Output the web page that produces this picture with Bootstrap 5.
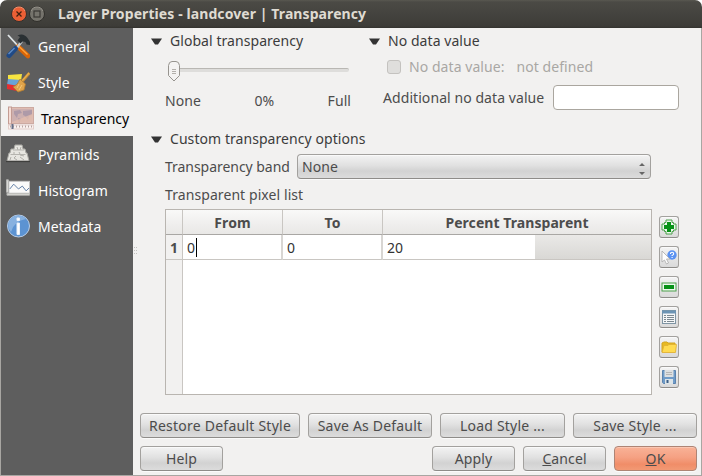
<!DOCTYPE html>
<html lang="en">
<head>
<meta charset="utf-8">
<meta name="viewport" content="width=device-width, initial-scale=1">
<title>Layer Properties - landcover | Transparency</title>
<link href="https://cdn.jsdelivr.net/npm/bootstrap@5.3.0/dist/css/bootstrap.min.css" rel="stylesheet">
<style>
body{width:702px;height:476px;overflow:hidden;background:#fff;font-family:"Noto Sans","Open Sans",sans-serif;font-size:14px;line-height:20px;color:#4c4c4c;letter-spacing:.06px;white-space:nowrap}
svg{display:block;flex:none}
.win{width:702px;height:476px}
.titlebar{height:28px;background:linear-gradient(#595850 0,#4b4a45 2px,#3d3c38 26px,#34332f);border-radius:7px 7px 0 0;color:#dfdbd2;font-weight:700;padding-left:11px;letter-spacing:.09px}
.wbtn{width:16px;height:16px}
.wbtn+.wbtn{margin-left:2px}
.caption-text{margin-left:13px}
.frame{height:448px;border:1px solid #a8a6a2;border-top:0;background:#f2f1f0}
.side{width:132px;background:#5e5e5e;color:#fff}
.side .item{height:36px;padding-left:5px;gap:8px}
.side .item span{padding-top:2px}
.side .item.sel{background:#f2f1f0;color:#000;padding-left:7px;gap:7px;letter-spacing:0}
.split{width:7px;padding:0 0 1px 1px}
.dark{color:#3c3c3c}
.head{height:26px;gap:8px}
.slider{margin:14px 0 0 16px}
.track{width:175px;height:4px;border-radius:2px;background:#dedddb;border-top:1px solid #b9b7b3;margin-left:7px}
.knob{left:1px;top:-7px}
.scale{margin:19px 0 0 14px;width:186px}
.off{color:#a9a7a4;height:26px;padding-left:18px}
.chk{width:14px;height:14px;border:1px solid #c4c2bf;border-radius:3px;background:#dfdedc;margin-right:8px}
.field{width:126px;height:25px;border:1px solid #aaa69f;border-radius:4px;background:#fff}
.push{border:1px solid #a3a19e;border-bottom-color:#8e8c89;border-radius:4px;background:linear-gradient(#f3f3f3,#e1e1e1 45%,#d2d2d2 70%,#dcdcdc);box-shadow:inset 0 1px 0 #fafafa,0 1px 0 #fafafa;color:#4c4c4c;font:inherit;line-height:20px;padding:0;height:25px;letter-spacing:.2px}
.push.combo{width:354px;padding:0 5px 0 4px;letter-spacing:.06px}
.push.ok{background:linear-gradient(#f9b297,#f5a183 45%,#f08d68 75%,#f29974);border-color:#ae8474;box-shadow:inset 0 1px 0 #fbc6b1,0 1px 0 #fafafa}
.push.tool{width:20px;height:22px;border-radius:3px;background:linear-gradient(#f5f5f5,#e6e6e6 50%,#dadada)}
.w-wide{width:160px;letter-spacing:.24px}
.w-mid{width:124px}
.w-mid2{width:125px}
.w-std{width:83px;letter-spacing:.1px}
.grid{width:487px;height:186px;border:1px solid #b9b5b0;background:#fff}
.cells{display:grid;grid-template-columns:17px 100px 100px 268px}
.th{height:25px;border-bottom:1px solid #a9a7a4;border-right:1px solid #c9c6c2;background:linear-gradient(#f9f9f8,#efeeed 60%,#e9e8e6);font-weight:700;text-align:center;line-height:25px}
.td{height:25px;border-right:2px solid #d8d6d3;border-bottom:1px solid #c9c6c2;padding-left:4px;line-height:25px;color:#333}
.vh{border-right:1px solid #c9c6c2;background:#f2f1f0;padding-left:4px;color:#4c4c4c}
.vrest{height:134px}
.last{border-right:0}
.pct{background:linear-gradient(90deg,#fff 152px,transparent 152px),linear-gradient(#eae9e7,#d9d8d5)}
.caret{border-right:1px solid #000;padding:0 1px 0 0}
.main{width:561px}
.upper{height:98px}
.nodata{margin:5px 0 0 14px}
.nodata span{width:170px;letter-spacing:.07px}
.band{width:132px;letter-spacing:-.04px}
.listcap{margin:6px 0 4px;letter-spacing:.08px}
.tools{gap:8px;padding:7px 0 0 7px}
</style>
<script src="https://cdn.jsdelivr.net/npm/bootstrap@5.3.0/dist/js/bootstrap.bundle.min.js"></script>
</head>
<body>
<div class="win">
 <div class="titlebar d-flex align-items-center">
  <svg class="wbtn" viewBox="0 0 16 16"><circle cx="8" cy="8" r="7.500" fill="#eb5f35" stroke="#33302c"/><path d="M2 5a6.500 6.500 0 0 1 12 0" fill="none" stroke="#f49572"/><path d="M5.500 5.500l5 5m0-5l-5 5" stroke="#40200f" stroke-width="1.300"/></svg>
  <svg class="wbtn" viewBox="0 0 16 16"><circle cx="8" cy="8" r="7.500" fill="#75736c" stroke="#302f2b"/><path d="M2 5a6.500 6.500 0 0 1 12 0" fill="none" stroke="#99968e"/><rect x="5" y="5" width="6" height="6" fill="none" stroke="#393834" stroke-width="1.200"/></svg>
  <span class="caption-text">Layer Properties - landcover | Transparency</span>
 </div>
 <div class="frame d-flex">
  <nav class="side flex-shrink-0">
   <div class="item d-flex align-items-center">
    <svg width="24" height="26" viewBox="0 0 24 26"><path d="M2 2l11 12" stroke="#dfe4e6" stroke-width="1.800"/><path d="M12 13.500L22 23" stroke="#d96508" stroke-width="4.600" stroke-linecap="round"/><path d="M13 13.500l8.500 8" stroke="#ffa33a" stroke-width="1.500"/><path d="M10 16l6-8" stroke="#c6cbd0" stroke-width="2.500"/><path d="M9.500 15.500L3 22.500" stroke="#204a87" stroke-width="5" stroke-linecap="round"/><path d="M8.500 15l-6 6" stroke="#5f8bc4" stroke-width="1.500"/><path d="M11.500 2.500q6-3 10 2.500l2.500 4v3l-3.500-.5q-.5-3.500-4-3l-2 2-3-3 2.500-3.500z" fill="#2a3033"/></svg>
    <span>General</span></div>
   <div class="item d-flex align-items-center">
    <svg width="24" height="24" viewBox="0 0 24 24"><path d="M2 5l14-1-1 7-13-1z" fill="#f7e340"/><path d="M2 9l13 1-2 7-12-2z" fill="#6aa3d6"/><path d="M1 14l12 2-2 5-10-2z" fill="#e62e30"/><path d="M23.500 3l-7 8" stroke="#c48a35" stroke-width="2.800"/><path d="M23 3l-7 8" stroke="#e9b04a" stroke-width="1.300"/><path d="M14 9l5.500 5-1.500 6-6 2-5-5q5-2 7-8z" fill="#dfa34a" stroke="#b47c30" stroke-width=".8"/><path d="M13 14l-2 4m5-3l-3 5" stroke="#f3c878"/></svg>
    <span>Style</span></div>
   <div class="item sel d-flex align-items-center">
    <svg width="26" height="24" viewBox="0 0 26 24"><rect x="3" y="1.500" width="22.500" height="16" fill="#dfbcb2" stroke="#cdaaa1"/><rect x="4" y="3" width="20" height="13" fill="#cdb0b0"/><path d="M6 5l6-1 2 3-4 1-1 4-3-4zm9 0l9-1v5l-3 1-1 4-3-4-2-1zm-5 7l3 1-2 4z" fill="#ae9aa8"/><path d="M4 16L24 8v8z" fill="#e5bfae" opacity=".7"/><rect x=".5" y="1" width="3" height="17" fill="#f5dcd5" stroke="#c39c93"/><rect x=".5" y="19" width="25" height="4" fill="#f9f1ef" stroke="#e3cec9"/><path d="M2 20.500h23" stroke="#b7a5a2" stroke-width="2" stroke-dasharray="1 2"/><path d="M4.500 18v5" stroke="#667089" stroke-width="2"/></svg>
    <span>Transparency</span></div>
   <div class="item d-flex align-items-center">
    <svg width="24" height="22" viewBox="0 0 24 22"><path d="M9 2h7l1 4h2l1 4h1l2 8H1l2-8h1l1-4h3z" fill="#e7e6e1" stroke="#aaa9a4"/><path d="M7 7h11M4.500 11.500h15" stroke="#b5b4af"/><path d="M11 4l1 3m3-3l-1 3M8 9v2m5-2l1 2M5 14l-1 3m6-4l-2 2 3 2m3-3l4 3m-4-5l4 1" stroke="#b0afaa" fill="none"/><path d="M0 18.500h24" stroke="#3f3f3d" stroke-width="1.300"/></svg>
    <span>Pyramids</span></div>
   <div class="item d-flex align-items-center">
    <svg class="mb-1" width="24" height="20" viewBox="0 0 25 20"><rect x="3" y="3" width="21.500" height="13" fill="#fafafa" stroke="#c4c4c4"/><path d="M.5 1.500h2v13h-2zM1 15.500h23.500v2H1z" fill="#dededb" stroke="#b5b5b3"/><path d="M4 11l4-5 5 5 4-3 4 5 3-3" fill="none" stroke="#5d7ba3"/></svg>
    <span>Histogram</span></div>
   <div class="item d-flex align-items-center">
    <svg width="24" height="24" viewBox="0 0 24 24"><circle cx="12.500" cy="12" r="11" fill="#5c93d2" stroke="#b9cde6" stroke-width="1"/><path d="M3 15A10 10 0 0 1 20 5Q8 7 5 18z" fill="#87b1e0"/><path d="M11 4h2.500v2.500H11zM11 9h2.500v11.500H11z" fill="#fff" stroke="#e8f0fa"/></svg>
    <span>Metadata</span></div>
  </nav>
  <div class="split d-flex align-items-center"><svg width="4" height="10" viewBox="0 0 4 10"><path d="M0 1.500h4M0 4.500h4M0 7.500h4" stroke="#c4c2bf" stroke-dasharray="1 1"/></svg></div>
  <main class="main d-flex flex-column">
   <section class="upper d-flex">
    <div style="width:218px;padding-left:11px">
     <div class="head dark d-flex align-items-center"><svg width="11" height="7" viewBox="0 0 11 7"><path d="M0 .5h11L7 6.500H4z" fill="#333"/></svg><span>Global transparency</span></div>
     <div class="slider position-relative"><div class="track"></div><svg class="knob position-absolute" width="12" height="21" viewBox="0 0 12 21"><path d="M.5 4.500Q1 .5 4 .5h4q3 0 3.500 4v10L6 20 .5 14.500z" fill="#f4f3f2" stroke="#97948f"/><path d="M4 8.500h4M4 10.500h4M4 12.500h4" stroke="#b3b0ab"/></svg></div>
     <div class="scale d-flex justify-content-between"><span>None</span><span>0%</span><span>Full</span></div>
    </div>
    <div style="padding-left:11px">
     <div class="head dark d-flex align-items-center"><svg width="11" height="7" viewBox="0 0 11 7"><path d="M0 .5h11L7 6.500H4z" fill="#333"/></svg><span>No data value</span></div>
     <div class="off d-flex align-items-center"><i class="chk"></i><span>No data value:</span><span class="ms-2 ps-1">not defined</span></div>
     <div class="nodata d-flex align-items-center"><span>Additional no data value</span><div class="field"></div></div>
    </div>
   </section>
   <section style="padding-left:11px">
    <div class="head dark d-flex align-items-center"><svg width="11" height="7" viewBox="0 0 11 7"><path d="M0 .5h11L7 6.500H4z" fill="#333"/></svg><span>Custom transparency options</span></div>
    <div style="padding:2px 0 0 14px">
     <div class="d-flex align-items-center"><span class="band">Transparency band</span><div class="push combo d-flex align-items-center justify-content-between"><span>None</span><svg class="mt-1" width="6" height="13" viewBox="0 0 6 13"><path d="M0 4l3-3 3 3zM0 10h6l-3 3z" fill="#666"/></svg></div></div>
     <div class="listcap">Transparent pixel list</div>
     <div class="d-flex">
      <div class="grid"><div class="cells">
       <div class="th"></div><div class="th">From</div><div class="th">To</div><div class="th last">Percent Transparent</div>
       <div class="td vh fw-bold">1</div><div class="td"><span class="caret">0</span></div><div class="td">0</div><div class="td pct last">20</div>
       <div class="vh vrest"></div></div></div>
      <div class="tools d-flex flex-column">
       <button class="push tool d-flex align-items-center justify-content-center"><svg width="16" height="16" viewBox="0 0 16 16"><path d="M5 1h6v2.500h1.500V5H15v6h-2.500v1.500H11V15H5v-2.500H3.500V11H1V5h2.500V3.500H5z" fill="#eef8ee" stroke="#4da04d"/><path d="M8 3v10M3 8h10" stroke="#089218" stroke-width="4"/></svg></button>
       <button class="push tool d-flex align-items-center justify-content-center"><svg width="18" height="18" viewBox="0 0 18 18"><circle cx="12" cy="7" r="4.700" fill="#5b92f2"/><path d="M10.500 6q0-1.700 1.600-1.700t1.600 1.400q0 1-1.600 1.800v.6m0 .9v1" fill="none" stroke="#fff" stroke-width="1.100"/><path d="M2 3v11l2.500-2 2 4 2-1-2-4h3.500z" fill="#fff" stroke="#aaa" stroke-width=".8"/></svg></button>
       <button class="push tool d-flex align-items-center justify-content-center"><svg width="16" height="16" viewBox="0 0 16 16"><rect x="1" y="4" width="14" height="8" fill="#eef8ee" stroke="#4da04d"/><rect x="3" y="6" width="10" height="4" fill="#089218"/></svg></button>
       <button class="push tool d-flex align-items-center justify-content-center"><svg width="16" height="16" viewBox="0 0 16 16"><rect x="1.500" y="1.500" width="13" height="13" fill="#f4f6f7" stroke="#7f95a4"/><path d="M1 3h14" stroke="#6c94b4" stroke-width="3"/><path d="M3 6.500h2m1 0h7M3 8.500h2m1 0h7M3 10.500h2m1 0h7M3 12.500h2m1 0h7" stroke="#7b8890"/></svg></button>
       <button class="push tool d-flex align-items-center justify-content-center"><svg width="16" height="16" viewBox="0 0 16 16"><path d="M1 13V4l2-1h3l1 1h7v9z" fill="#e7b922" stroke="#d3a520"/><path d="M1 13.500l2-7h4l1-1h7.500l-1 8z" fill="#ffdb50" stroke="#dfb034" stroke-width=".8"/></svg></button>
       <button class="push tool d-flex align-items-center justify-content-center"><svg width="16" height="16" viewBox="0 0 16 16"><path d="M1.500 1.500h13v13h-12l-1-1z" fill="#6f9bc8" stroke="#5b83ae"/><path d="M3.500 1h9v7h-9z" fill="#dcdfe1"/><path d="M5 3.500h6M5 5.500h6" stroke="#b5b5b5"/><path d="M4 10h8v5H4z" fill="#dce4e8"/><path d="M5.500 11h2v3h-2z" fill="#3c5f87"/></svg></button>
      </div>
     </div>
    </div>
   </section>
   <div class="d-flex" style="gap:8px;margin-top:18px">
    <button class="push w-wide">Restore Default Style</button><button class="push w-mid">Save As Default</button><button class="push w-mid2">Load Style ...</button><button class="push w-mid">Save Style ...</button>
   </div>
   <div class="d-flex" style="gap:8px;margin-top:8px;width:557px">
    <button class="push w-std me-auto">Help</button><button class="push w-std">Apply</button><button class="push w-std"><u>C</u>ancel</button><button class="push ok w-std"><u>O</u>K</button>
   </div>
  </main>
 </div>
</div>
</body>
</html>
